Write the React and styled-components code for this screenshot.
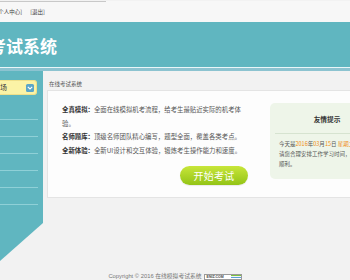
import React from 'react'
import styled, { createGlobalStyle } from 'styled-components'

const TEAL = '#60b6c0'

const GlobalStyle = createGlobalStyle`
    html, body {
        margin: 0;
        padding: 0;
        background: #f2f2f2;
        overflow: hidden;
    }
    body {
        font-family: "Noto Sans CJK SC", "Noto Sans", sans-serif;
        color: #555;
    }
`

const features = [
    { label: '全真模拟：', text: '全面在线模拟机考流程，给考生最贴近实际的机考体验。' },
    { label: '名师题库：', text: '顶级名师团队精心编写，题型全面，覆盖各类考点。' },
    { label: '全新体验：', text: '全新UI设计和交互体验，锻炼考生操作能力和速度。' },
]

const menu = ['在线练习', '错题回顾', '成绩查询', '考试记录', '个人资料', '修改密码']

const App = () => (
    <Page>
        <GlobalStyle />
        <TopBar>
            <TopRule />
            <TopLinks>
                <TopLink $first>[个人中心]</TopLink>
                <TopLink>[退出]</TopLink>
            </TopLinks>
        </TopBar>

        <Header>
            <Title>考试系统</Title>
        </Header>
        <HeaderEdge />

        <Body>
            <Sidebar>
                <ActiveItem>
                    <ActiveLabel>模拟考场</ActiveLabel>
                    <DropIcon>
                        <svg width="6" height="4" viewBox="0 0 6 4">
                            <path d="M0.8 0.8 L3 3 L5.2 0.8" fill="none" stroke="#fff" strokeWidth="1.1" />
                        </svg>
                    </DropIcon>
                </ActiveItem>
                <MenuList>
                    { menu.map(m => <MenuItem key={ m } />) }
                </MenuList>
            </Sidebar>

            <Main>
                <Crumb>在线考试系统</Crumb>
                <Panel>
                    <Intro>
                        { features.map(f => (
                            <Para key={ f.label }>
                                <Label>{ f.label }</Label>{ f.text }
                            </Para>
                        )) }
                        <StartButton>开始考试</StartButton>
                    </Intro>

                    <TipBox>
                        <TipTitle>友情提示</TipTitle>
                        <TipText>
                            今天是<Hl>2016</Hl>年<Hl>03</Hl>月<Hl>15</Hl>日 <Hl>星期二</Hl>
                            <br />
                            请您合理安排工作学习时间，祝您考试顺利。
                        </TipText>
                    </TipBox>
                </Panel>
            </Main>
        </Body>

        <Footer>
            Copyright © 2016 在线模拟考试系统
            <Badge>
                <BadgeText>ENIZ.COM</BadgeText>
                <BadgeStripes>
                    <Stripe $c="#7cc243" />
                    <Stripe $c="#f3f3f3" />
                    <Stripe $c="#5aa0d8" />
                </BadgeStripes>
            </Badge>
        </Footer>
    </Page>
)

export default App

const Page = styled.div`
    width: 350px;
    height: 280px;
    overflow: hidden;
`

const TopBar = styled.div`
    height: 21px;
    background: #f7f7f7;
`

const TopRule = styled.div`
    width: 106px;
    height: 1px;
    margin-top: 1px;
    background: #c8c8c8;
`

const TopLinks = styled.div`
    display: flex;
    gap: 8px;
    margin-top: 6px;
    font-size: 5.5px;
    line-height: 8px;
    color: #444;
`

const TopLink = styled.span`
    margin-left: ${ p => p.$first ? '-3.5px' : '0' };
`

const Header = styled.div`
    height: 45px;
    background: ${ TEAL };
    border-bottom: 1px solid #eaf6f8;
    display: flex;
    align-items: center;
`

const HeaderEdge = styled.div`
    height: 3px;
    background: #8cc3d0;
`

const Title = styled.div`
    margin-left: -11px;
    font-size: 17px;
    font-weight: 700;
    color: #fff;
    letter-spacing: 0;
    padding-top: 2px;
`

const Body = styled.div`
    display: flex;
    align-items: flex-start;
`

const Sidebar = styled.div`
    flex: 0 0 43px;
    height: 190px;
    background: ${ TEAL };
    padding-top: 9px;
    box-sizing: border-box;
    clip-path: polygon(0 0, 43px 0, 43px 152px, 0 190px);
`

const ActiveItem = styled.div`
    width: 37px;
    height: 15px;
    box-sizing: border-box;
    display: flex;
    align-items: center;
    justify-content: space-between;
    padding-right: 2px;
    background: #fbf3a6;
    border: 1px solid #efe08a;
    border-left: none;
    border-radius: 0 3px 3px 0;
    overflow: hidden;
`

const ActiveLabel = styled.span`
    margin-left: -21px;
    font-size: 7px;
    line-height: 9px;
    color: #3a3a3a;
    white-space: nowrap;
`

const DropIcon = styled.span`
    width: 8px;
    height: 8px;
    border-radius: 1.5px;
    background: #5ba6c8;
    display: flex;
    align-items: center;
    justify-content: center;
`

const MenuList = styled.div`
    margin-top: 8px;
`

const MenuItem = styled.div`
    width: 38px;
    height: 16px;
    border-bottom: 1px solid #8fd0d7;
`

const Main = styled.div`
    flex: 1;
    margin-left: 2px;
    padding-top: 8px;
    min-width: 0;
`

const Crumb = styled.div`
    padding-left: 4px;
    font-size: 5.5px;
    line-height: 11px;
    color: #555;
`

const Panel = styled.div`
    margin-left: 2px;
    display: flex;
    align-items: flex-start;
    padding: 12px 0 12px 14px;
    background: #fdfdfd;
    border: 1px solid #e4e4e4;
    border-right: none;
    overflow: hidden;
`

const Intro = styled.div`
    flex: 0 0 187px;
    display: flex;
    flex-direction: column;
    align-items: flex-end;
`

const Para = styled.div`
    align-self: stretch;
    font-size: 6.4px;
    line-height: 13.7px;
    color: #555;
`

const Label = styled.span`
    font-weight: 700;
    color: #333;
`

const StartButton = styled.div`
    margin-top: 8px;
    margin-right: 1px;
    width: 68px;
    height: 19px;
    border-radius: 10px;
    background: linear-gradient(#c8e63a, #93c416);
    box-shadow: 0 1px 1px rgba(0, 0, 0, 0.08);
    display: flex;
    align-items: center;
    justify-content: center;
    font-size: 10px;
    color: #fff;
    letter-spacing: 0.3px;
`

const TipBox = styled.div`
    flex: 0 0 114px;
    margin-left: 21px;
    background: #eef5e9;
    border-radius: 5px;
    padding-bottom: 10px;
`

const TipTitle = styled.div`
    margin: 0 5px;
    padding: 8px 0 6px;
    line-height: 16px;
    text-align: center;
    font-size: 6.7px;
    font-weight: 700;
    color: #333;
    border-bottom: 1px solid #d6e3d0;
`

const TipText = styled.div`
    padding: 5px 9px 0;
    font-size: 5.5px;
    line-height: 10px;
    color: #555;
`

const Hl = styled.span`
    color: #ee8a12;
`

const Footer = styled.div`
    margin-top: 12px;
    height: 7px;
    border-bottom: 1px solid #dcdcdc;
    display: flex;
    justify-content: center;
    align-items: center;
    gap: 2px;
    font-family: "Liberation Sans", "Noto Sans CJK SC", sans-serif;
    font-size: 5.8px;
    line-height: 7px;
    color: #777;
    white-space: nowrap;
`

const Badge = styled.span`
    width: 38px;
    height: 6px;
    box-sizing: border-box;
    border: 1px solid #9a9a9a;
    background: #fff;
    display: flex;
    align-items: center;
    justify-content: space-between;
    overflow: hidden;
`

const BadgeText = styled.span`
    padding-left: 2px;
    font-size: 3.5px;
    line-height: 4px;
    font-weight: 700;
    color: #444;
`

const BadgeStripes = styled.span`
    width: 10px;
    display: flex;
    flex-direction: column;
`

const Stripe = styled.span`
    height: 1.3px;
    background: ${ p => p.$c };
`
